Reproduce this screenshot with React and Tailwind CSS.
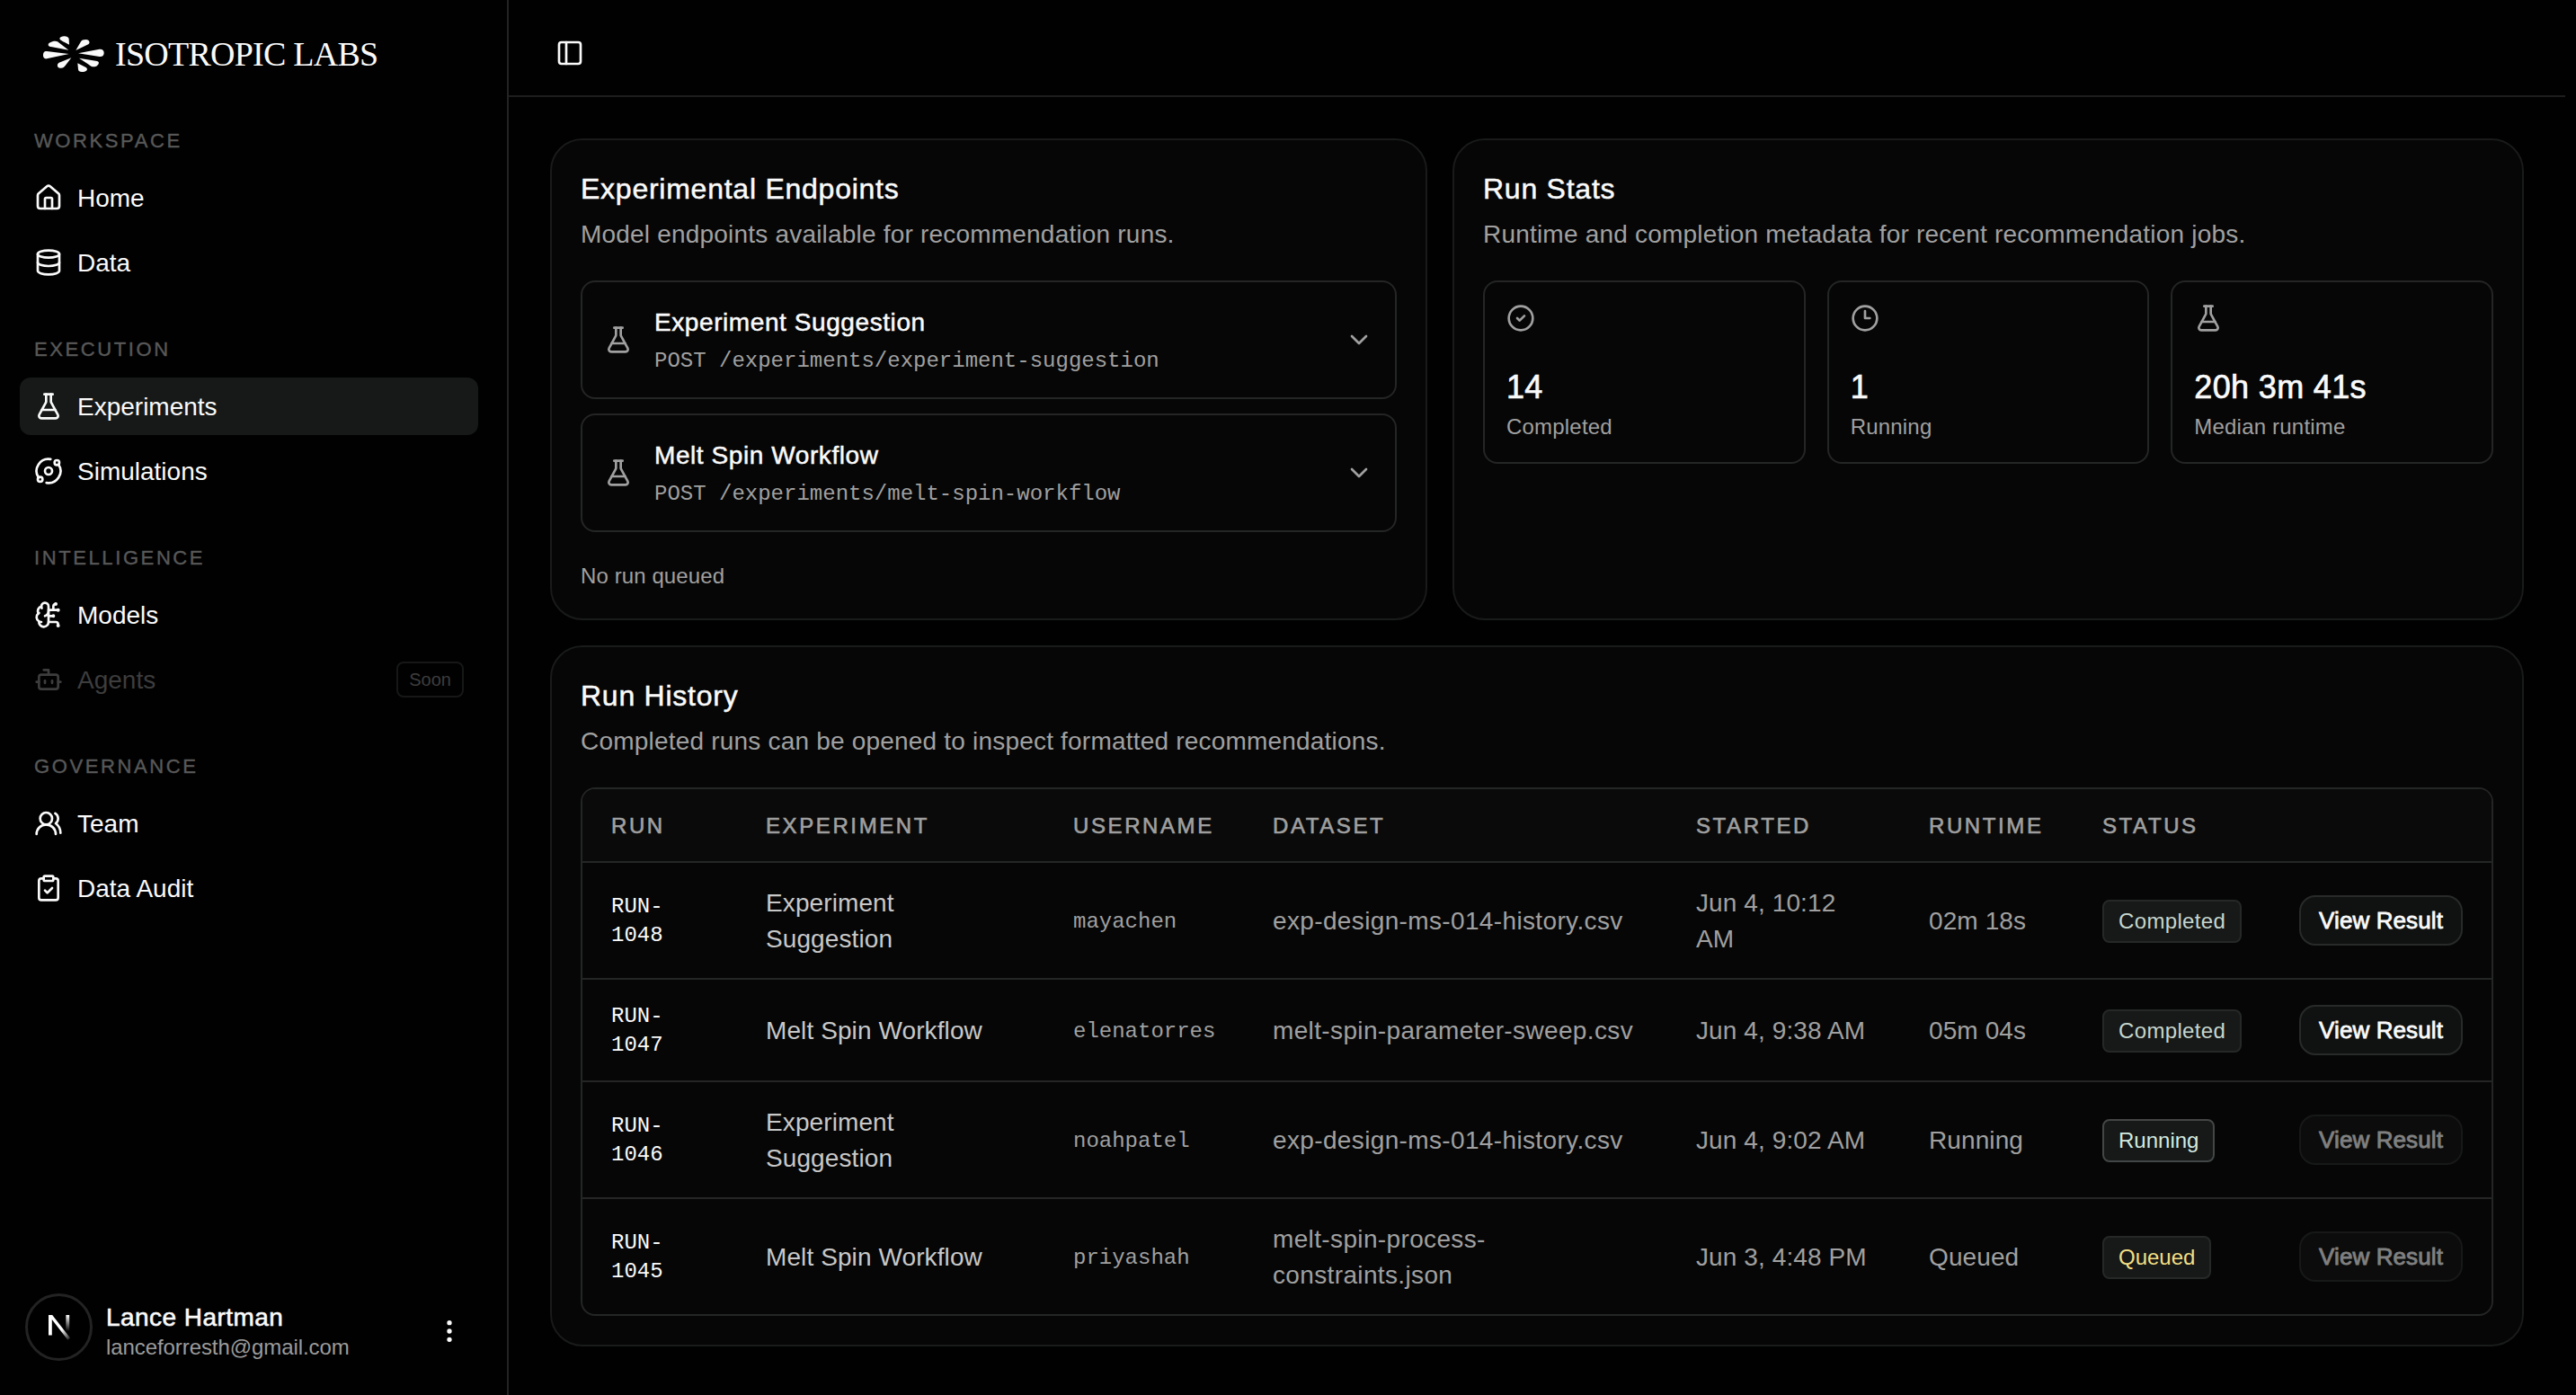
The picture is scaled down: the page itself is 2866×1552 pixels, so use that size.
import React from "react";
import {
  BotIcon,
  BrainCircuit,
  ChevronDown,
  CircleCheck,
  ClipboardCheck,
  Clock3,
  Database,
  EllipsisVertical,
  FlaskConical,
  House,
  Orbit,
  PanelLeft,
  UsersRound,
} from "lucide-react";
import clsx from "clsx";

const navGroups = [
  {
    label: "Workspace",
    items: [
      { title: "Home", icon: House },
      { title: "Data", icon: Database },
    ],
  },
  {
    label: "Execution",
    items: [
      { title: "Experiments", icon: FlaskConical, active: true },
      { title: "Simulations", icon: Orbit },
    ],
  },
  {
    label: "Intelligence",
    items: [
      { title: "Models", icon: BrainCircuit },
      { title: "Agents", icon: BotIcon, soon: true },
    ],
  },
  {
    label: "Governance",
    items: [
      { title: "Team", icon: UsersRound },
      { title: "Data Audit", icon: ClipboardCheck },
    ],
  },
];

const endpoints = [
  { name: "Experiment Suggestion", path: "POST /experiments/experiment-suggestion" },
  { name: "Melt Spin Workflow", path: "POST /experiments/melt-spin-workflow" },
];

const stats = [
  { value: "14", label: "Completed", icon: CircleCheck },
  { value: "1", label: "Running", icon: Clock3 },
  { value: "20h 3m 41s", label: "Median runtime", icon: FlaskConical },
];

const runs = [
  {
    id: "RUN-\n1048",
    experiment: "Experiment\nSuggestion",
    username: "mayachen",
    dataset: "exp-design-ms-014-history.csv",
    started: "Jun 4, 10:12\nAM",
    runtime: "02m 18s",
    status: "Completed",
  },
  {
    id: "RUN-\n1047",
    experiment: "Melt Spin Workflow",
    username: "elenatorres",
    dataset: "melt-spin-parameter-sweep.csv",
    started: "Jun 4, 9:38 AM",
    runtime: "05m 04s",
    status: "Completed",
  },
  {
    id: "RUN-\n1046",
    experiment: "Experiment\nSuggestion",
    username: "noahpatel",
    dataset: "exp-design-ms-014-history.csv",
    started: "Jun 4, 9:02 AM",
    runtime: "Running",
    status: "Running",
  },
  {
    id: "RUN-\n1045",
    experiment: "Melt Spin Workflow",
    username: "priyashah",
    dataset: "melt-spin-process-\nconstraints.json",
    started: "Jun 3, 4:48 PM",
    runtime: "Queued",
    status: "Queued",
  },
];

const statusStyles = {
  Completed: "border-[#262828] text-[#c6d6ce] tracking-[0.35px]",
  Running: "border-[#434646] text-[#d3eae0] tracking-normal",
  Queued: "border-[#262828] text-[#f2df86] tracking-normal",
};

function LogoMark() {
  return (
    <svg viewBox="0 0 228 156" className="h-[52px] w-[76px]" fill="#fafafa">
      <path d="M98 78 L24 69 C14 69 12 75 12 82 C12 90 15 95 24 94 Z" />
      <path d="M97 65 L60 37 C53 32 30 38 29 47 C29 52 33 54 42 55 Z" />
      <path d="M99 47 L98 28 C97 15 68 16 67 27 C68 31 74 35 99 47 Z" />
      <path d="M121 66 L163 46 C170 41 166 30 155 30 C145 30 141 32 138 37 Z" />
      <path d="M129 76 L200 62 C211 61 215 67 215 74 C215 82 211 87 200 87 Z" />
      <path d="M132 92 L192 102 C202 104 198 116 187 120 C178 123 171 119 165 114 Z" />
      <path d="M127 109 L155 123 C163 129 158 137 146 138 C135 139 130 137 129 130 Z" />
      <path d="M106 91 L65 107 C57 112 58 124 69 125 C78 126 82 122 86 117 Z" />
    </svg>
  );
}

function Avatar() {
  return (
    <div className="-mt-2 flex size-[75px] items-center justify-center rounded-full border-[3px] border-[#232323] bg-black">
      <svg viewBox="0 0 24 28" className="h-[28px] w-[24px]" fill="none">
        <defs>
          <linearGradient id="diagonal" x1="14" y1="17" x2="23" y2="28" gradientUnits="userSpaceOnUse">
            <stop stopColor="#fff" />
            <stop offset="1" stopColor="#fff" stopOpacity="0.1" />
          </linearGradient>
          <linearGradient id="stem" x1="0" y1="0" x2="0" y2="18" gradientUnits="userSpaceOnUse">
            <stop stopColor="#fff" />
            <stop offset="1" stopColor="#fff" stopOpacity="0" />
          </linearGradient>
        </defs>
        <path d="M0 0h4.2L24 25.6 21.4 27.8 3.8 5v17.5H0z" fill="url(#diagonal)" />
        <rect x="19.4" y="0" width="3.8" height="18" fill="url(#stem)" />
      </svg>
    </div>
  );
}

function Sidebar() {
  return (
    <aside className="flex w-[566px] shrink-0 flex-col border-r-2 border-[#232323]">
      <div className="flex h-[124px] items-start pt-[34px] pl-[44px]">
        <LogoMark />
        <span className="mt-1 ml-2 font-['Liberation_Serif',serif] text-[38px] leading-[44px] tracking-[-0.75px] whitespace-nowrap text-neutral-50">
          ISOTROPIC LABS
        </span>
      </div>

      <nav className="flex flex-col gap-8 pr-8 pl-[22px]">
        {navGroups.map((group) => (
          <div key={group.label}>
            <div className="flex h-16 items-center px-4 text-[22px] tracking-[2.6px] text-[#585858] uppercase [-webkit-text-stroke:0.4px]">
              {group.label}
            </div>
            <div className="flex flex-col gap-2">
              {group.items.map((item) => (
                <a
                  key={item.title}
                  className={clsx(
                    "flex h-16 items-center gap-4 rounded-xl px-4 text-[28px]",
                    item.active && "bg-[#161918]",
                    item.soon ? "text-[#3d3d3d]" : "text-neutral-50"
                  )}
                >
                  <item.icon size={32} />
                  <span className="pt-[2px]">{item.title}</span>
                  {item.soon && (
                    <span className="ml-auto flex h-10 items-center rounded-lg border-2 border-[#161717] px-3 text-xl">
                      Soon
                    </span>
                  )}
                </a>
              ))}
            </div>
          </div>
        ))}
      </nav>

      <div className="mt-auto mb-[38px] flex items-center pr-[48px] pl-7">
        <Avatar />
        <div className="ml-[15px] flex flex-col gap-[2px]">
          <span className="text-[28px] leading-[34px] tracking-[0.45px] text-neutral-50 [-webkit-text-stroke:0.6px]">
            Lance Hartman
          </span>
          <span className="text-2xl leading-7 tracking-[-0.08px] text-[#9b9b9b]">lanceforresth@gmail.com</span>
        </div>
        <EllipsisVertical size={32} className="ml-auto text-neutral-50" />
      </div>
    </aside>
  );
}

function Card({ title, description, className, children }) {
  return (
    <section className={clsx("rounded-[36px] border-2 border-[#191a1a] bg-[#060606] p-8", className)}>
      <h2 className="text-[32px] leading-[44px] tracking-[0.75px] text-neutral-50 [-webkit-text-stroke:0.5px]">
        {title}
      </h2>
      <p className="mt-[9px] mb-[31px] text-[28px] leading-10 tracking-[0.2px] text-[#a0a0a0]">{description}</p>
      {children}
    </section>
  );
}

function Endpoint({ name, path }) {
  return (
    <div className="flex items-center gap-6 rounded-2xl border-2 border-[#242525] p-6">
      <FlaskConical size={32} className="text-[#a0a0a0]" />
      <div className="flex flex-1 flex-col gap-[6px]">
        <span className="text-[28px] leading-[42px] tracking-[0.58px] text-neutral-50 [-webkit-text-stroke:0.5px]">
          {name}
        </span>
        <span className="font-['Liberation_Mono',monospace] text-2xl leading-8 text-[#a0a0a0]">{path}</span>
      </div>
      <ChevronDown size={32} className="text-[#a0a0a0]" />
    </div>
  );
}

function StatTile({ value, label, icon: Icon }) {
  return (
    <div className="flex h-[204px] flex-col rounded-2xl border-2 border-[#242525] px-6 pt-6">
      <Icon size={32} className="shrink-0 text-[#a0a0a0]" />
      <span className="mt-[37px] text-4xl leading-[48px] tracking-[0.35px] text-neutral-50 [-webkit-text-stroke:0.7px]">
        {value}
      </span>
      <span className="mt-1 text-2xl leading-8 tracking-[0.2px] text-[#a0a0a0]">{label}</span>
    </div>
  );
}

function RunTable() {
  return (
    <div className="overflow-hidden rounded-2xl border-2 border-[#242525]">
      <table className="w-full table-fixed text-left text-[28px] leading-10 tracking-[0.1px] whitespace-pre-line text-[#a0a0a0]">
        <colgroup>
          <col className="w-[172px]" />
          <col className="w-[342px]" />
          <col className="w-[222px]" />
          <col className="w-[471px]" />
          <col className="w-[259px]" />
          <col className="w-[193px]" />
          <col className="w-[219px]" />
          <col />
        </colgroup>
        <thead>
          <tr className="h-[81px] border-b-2 border-[#242525] bg-[#0a0a0a] text-2xl tracking-[2.6px] uppercase [-webkit-text-stroke:0.6px]">
            {["Run", "Experiment", "Username", "Dataset", "Started", "Runtime", "Status", ""].map((head) => (
              <th key={head} className="pt-[2px] pl-8 font-normal">
                {head}
              </th>
            ))}
          </tr>
        </thead>
        <tbody>
          {runs.map((run) => (
            <tr key={run.id} className="border-b-2 border-[#242525] last:border-b-0">
              <td className="pt-[25px] pb-[23px] pl-8 font-['Liberation_Mono',monospace] text-2xl leading-8 tracking-normal text-neutral-50">
                {run.id}
              </td>
              <td className="pt-[25px] pb-[23px] pl-8 text-[#c8c8c8]">{run.experiment}</td>
              <td className="pt-1 pl-8 font-['Liberation_Mono',monospace] text-2xl leading-8 tracking-normal">
                {run.username}
              </td>
              <td className="pt-[25px] pb-[23px] pl-8 tracking-[0.36px]">{run.dataset}</td>
              <td className="pt-[25px] pb-[23px] pl-8">{run.started}</td>
              <td className="pt-[2px] pl-8">{run.runtime}</td>
              <td className="pl-8">
                <div
                  className={clsx(
                    "mt-[2px] flex h-12 w-fit items-center rounded-lg border-2 bg-[#161918] px-4 text-2xl",
                    statusStyles[run.status]
                  )}
                >
                  {run.status}
                </div>
              </td>
              <td className="pl-8">
                <button
                  disabled={run.status !== "Completed"}
                  className="flex h-14 w-[182px] items-center justify-center rounded-[18px] border-2 border-[#282a2a] bg-[#101211] text-[26px] whitespace-nowrap text-neutral-50 [-webkit-text-stroke:0.8px] disabled:opacity-50"
                >
                  View Result
                </button>
              </td>
            </tr>
          ))}
        </tbody>
      </table>
    </div>
  );
}

export default function App() {
  return (
    <div className="flex h-[1552px] w-[2866px] overflow-hidden bg-[#010101] font-['Liberation_Sans',Arial,sans-serif]">
      <Sidebar />
      <div className="flex flex-1 flex-col pr-3">
        <header className="flex h-[108px] items-start border-b-2 border-[#1d1d1d] pt-[43px] pl-[52px]">
          <PanelLeft size={32} className="text-neutral-50" />
        </header>
        <main className="flex flex-col gap-7 p-[46px]">
          <div className="flex gap-7">
            <Card
              className="w-[976px] shrink-0"
              title="Experimental Endpoints"
              description="Model endpoints available for recommendation runs."
            >
              <div className="flex flex-col gap-4">
                {endpoints.map((endpoint) => (
                  <Endpoint key={endpoint.name} {...endpoint} />
                ))}
              </div>
              <p className="mt-8 h-8 text-2xl leading-[34px] tracking-[0.1px] text-[#a0a0a0]">No run queued</p>
            </Card>
            <Card
              className="flex-1"
              title="Run Stats"
              description="Runtime and completion metadata for recent recommendation jobs."
            >
              <div className="grid grid-cols-3 gap-6">
                {stats.map((stat) => (
                  <StatTile key={stat.label} {...stat} />
                ))}
              </div>
            </Card>
          </div>
          <Card
            title="Run History"
            description="Completed runs can be opened to inspect formatted recommendations."
          >
            <RunTable />
          </Card>
        </main>
      </div>
    </div>
  );
}
